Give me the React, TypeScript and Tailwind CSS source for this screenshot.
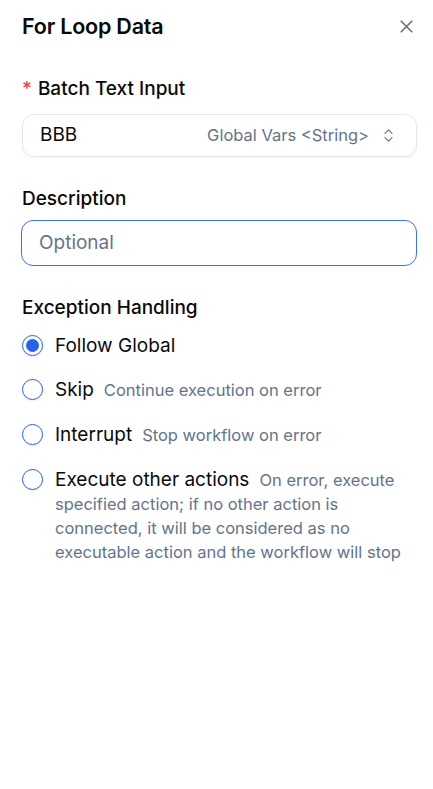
import { X, ChevronsUpDown } from "lucide-react";

type Option = { label: string; hint?: string };

const options: Option[] = [
  { label: "Follow Global" },
  { label: "Skip", hint: "Continue execution on error" },
  { label: "Interrupt", hint: "Stop workflow on error" },
  {
    label: "Execute other actions",
    hint: "On error, execute specified action; if no other action is connected, it will be considered as no executable action and the workflow will stop",
  },
];

function Radio({ checked }: { checked?: boolean }) {
  return (
    <span className="mt-[1px] flex h-[21px] w-[21px] shrink-0 items-center justify-center rounded-full border-[1.5px] border-[#2563eb] bg-white shadow-[0_1px_2px_rgba(0,0,0,0.08)]">
      {checked && <span className="h-[13px] w-[13px] rounded-full bg-[#2563eb]" />}
    </span>
  );
}

export default function App() {
  return (
    <div className="min-h-[789px] w-[433px] bg-white pl-[22px] pr-[16px] pt-[12px] font-['Inter',sans-serif] text-[#0a0a0a]">
      <div className="flex items-center justify-between">
        <h1 className="text-[21.5px] font-semibold leading-[28px] tracking-[-0.2px]">For Loop Data</h1>
        <X className="mr-[0px] h-[21px] w-[21px] text-[#6b7280]" strokeWidth={2} />
      </div>

      <div className="mt-[37px] flex items-center gap-[6px] text-[19px] font-medium leading-[24px]">
        <span className="text-[#ef4444]">*</span>
        <span>Batch Text Input</span>
      </div>
      <div className="mt-[13px] flex h-[43px] items-center rounded-[12px] border border-[#e2e8f0] pl-[17px] pr-[19px] shadow-[0_1px_2px_rgba(0,0,0,0.05)]">
        <span className="flex-1 text-[19px]">BBB</span>
        <span className="text-[16.5px] text-[#64748b]">Global Vars &lt;String&gt;</span>
        <ChevronsUpDown className="ml-[11px] h-[17px] w-[17px] text-[#64748b]" strokeWidth={1.6} />
      </div>

      <div className="mt-[30px] text-[19px] font-medium leading-[24px]">Description</div>
      <div className="ml-[-1px] mt-[9px] flex h-[46px] items-center rounded-[12px] border-[1.5px] border-[#3b72e8] px-[17px]">
        <span className="text-[19px] text-[#64748b]">Optional</span>
      </div>

      <div className="mt-[30px] text-[19px] font-medium leading-[24px]">Exception Handling</div>
      <div className="mt-[14px] flex flex-col gap-[21px]">
        {options.map((o, i) => (
          <div key={o.label} className="flex items-start gap-[12px]">
            <Radio checked={i === 0} />
            <p className="text-[19px] leading-[23px]">
              {o.label}
              {o.hint && <span className="ml-[10px] text-[16.5px] text-[#64748b]">{o.hint}</span>}
            </p>
          </div>
        ))}
      </div>
    </div>
  );
}
